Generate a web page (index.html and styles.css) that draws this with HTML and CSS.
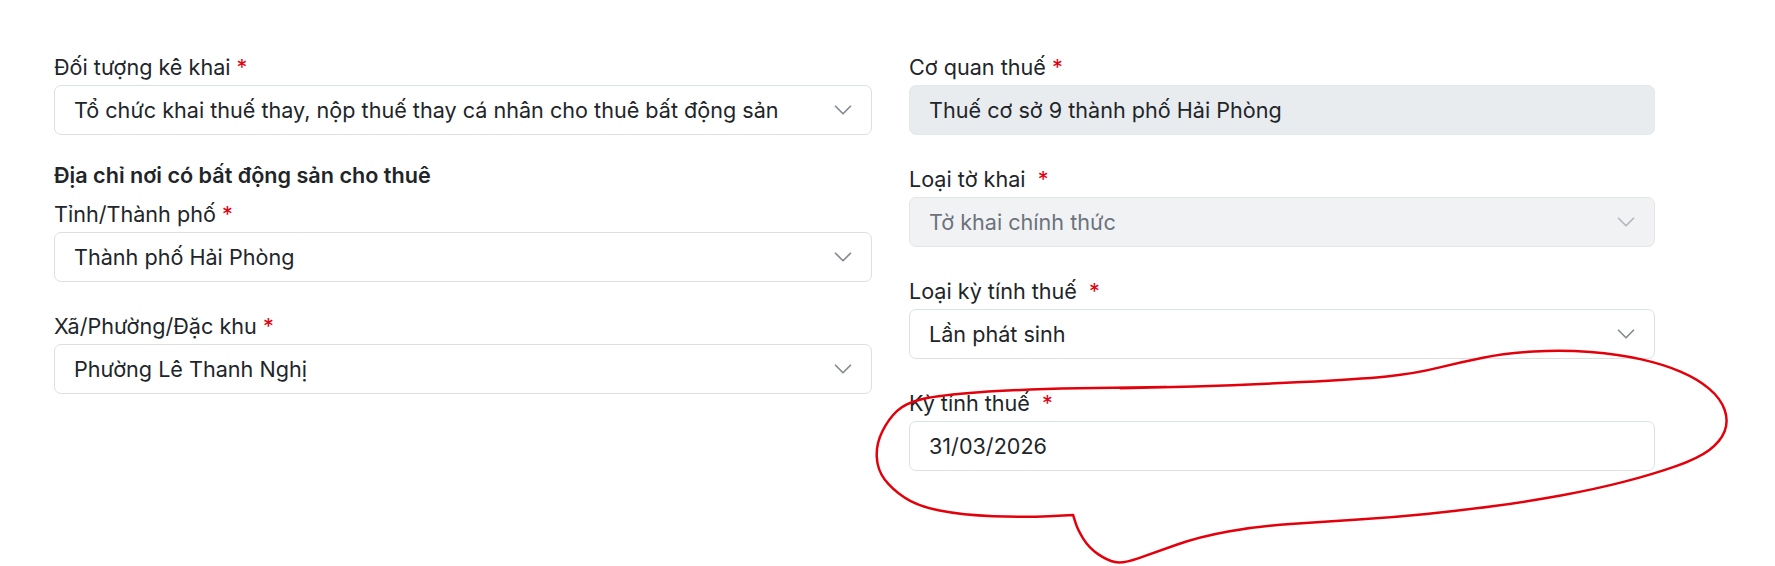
FILE: index.html
```html
<!DOCTYPE html>
<html lang="vi">
<head>
<meta charset="utf-8">
<title>Tờ khai</title>
<link rel="stylesheet" href="styles.css">
</head>
<body>
<div class="page">
  <div class="form">
    <div class="col">
      <div class="field field-first">
        <div class="label">Đối tượng kê khai <span class="req">*</span></div>
        <div class="control select">
          <span class="value">Tổ chức khai thuế thay, nộp thuế thay cá nhân cho thuê bất động sản</span>
          <svg class="chev" viewBox="0 0 16 16" width="20" height="20"><path d="M2 5l6 6 6-6" fill="none" stroke="currentColor" stroke-width="1.4" stroke-linecap="round" stroke-linejoin="round"/></svg>
        </div>
      </div>
      <div class="section-title">Địa chỉ nơi có bất động sản cho thuê</div>
      <div class="field">
        <div class="label">Tỉnh/Thành phố <span class="req">*</span></div>
        <div class="control select">
          <span class="value">Thành phố Hải Phòng</span>
          <svg class="chev" viewBox="0 0 16 16" width="20" height="20"><path d="M2 5l6 6 6-6" fill="none" stroke="currentColor" stroke-width="1.4" stroke-linecap="round" stroke-linejoin="round"/></svg>
        </div>
      </div>
      <div class="field">
        <div class="label">Xã/Phường/Đặc khu <span class="req">*</span></div>
        <div class="control select">
          <span class="value">Phường Lê Thanh Nghị</span>
          <svg class="chev" viewBox="0 0 16 16" width="20" height="20"><path d="M2 5l6 6 6-6" fill="none" stroke="currentColor" stroke-width="1.4" stroke-linecap="round" stroke-linejoin="round"/></svg>
        </div>
      </div>
    </div>
    <div class="col">
      <div class="field">
        <div class="label">Cơ quan thuế <span class="req">*</span></div>
        <div class="control readonly">
          <span class="value">Thuế cơ sở 9 thành phố Hải Phòng</span>
        </div>
      </div>
      <div class="field">
        <div class="label">Loại tờ khai &nbsp;<span class="req">*</span></div>
        <div class="control select disabled">
          <span class="value">Tờ khai chính thức</span>
          <svg class="chev" viewBox="0 0 16 16" width="20" height="20"><path d="M2 5l6 6 6-6" fill="none" stroke="currentColor" stroke-width="1.4" stroke-linecap="round" stroke-linejoin="round"/></svg>
        </div>
      </div>
      <div class="field">
        <div class="label">Loại kỳ tính thuế &nbsp;<span class="req">*</span></div>
        <div class="control select">
          <span class="value">Lần phát sinh</span>
          <svg class="chev" viewBox="0 0 16 16" width="20" height="20"><path d="M2 5l6 6 6-6" fill="none" stroke="currentColor" stroke-width="1.4" stroke-linecap="round" stroke-linejoin="round"/></svg>
        </div>
      </div>
      <div class="field">
        <div class="label">Kỳ tính thuế &nbsp;<span class="req">*</span></div>
        <div class="control">
          <span class="value">31/03/2026</span>
        </div>
      </div>
    </div>
  </div>
  <svg class="annotation" viewBox="0 0 1568 500" width="1775" height="566" aria-hidden="true">
    <path d="M1030 341.8 L952.5 343 Q900 344 865 346.5 Q830 349 815 352.5 Q800 356 792.5 363 Q785 370 779.5 381 Q774 392 774.5 403.5 Q775 415 781.5 423.5 Q788 432 799 439.5 Q810 447 830 451 Q850 455 877.5 456 Q905 457 926.5 456 L948 455 L950 461.5 Q952 468 957 476 Q962 484 970 489.5 Q978 495 985 496.5 Q992 498 1006 493 Q1020 488 1040 481 Q1060 474 1085 469.5 Q1110 465 1140 463 Q1170 461 1200 459 Q1230 457 1260 454 Q1290 451 1320 447 Q1350 443 1380 437.5 Q1410 432 1435 425.5 Q1460 419 1480 412 Q1500 405 1510 397.5 Q1520 390 1523.5 381 Q1527 372 1523.5 362 Q1520 352 1510 343.5 Q1500 335 1485 328.5 Q1470 322 1450 317.5 Q1430 313 1405 311 Q1380 309 1355 310.5 Q1330 312 1310 316 Q1290 320 1270 325 Q1250 330 1225 332.5 Q1200 335 1150 337.5 Q1100 340 1055 341.5 L990 343" fill="none" stroke="#e4000b" stroke-width="2.2" stroke-linecap="round" stroke-linejoin="round"/>
  </svg>
</div>
</body>
</html>
```

FILE: styles.css
```css
* { box-sizing: border-box; }
html, body { margin: 0; padding: 0; background: #ffffff; }
body {
  font-family: Inter, "Noto Sans", "Liberation Sans", sans-serif;
  color: #212529;
  font-size: 21.6px;
}
.page {
  position: relative;
  width: 1775px;
  height: 566px;
  overflow: hidden;
}
.form {
  display: grid;
  grid-template-columns: 818px 746px;
  column-gap: 37px;
  padding: 52px 0 0 54px;
  align-items: start;
}
.col {
  display: flex;
  flex-direction: column;
}
.field { margin-bottom: 29px; }
.field-first { margin-bottom: 25px; }
.label {
  line-height: 30px;
  height: 30px;
  margin-bottom: 3px;
  color: #212529;
  white-space: pre;
}
.req { color: #e3000f; }
.section-title {
  font-weight: 600;
  line-height: 30px;
  height: 30px;
  margin-bottom: 9px;
}
.control {
  height: 50px;
  border: 1px solid #dcdfe3;
  border-radius: 7px;
  padding: 0 18px 0 19px;
  display: flex;
  align-items: center;
  background: #ffffff;
  color: #212529;
}
.control .value { flex: 1; white-space: nowrap; }
.chev {
  color: #868b92;
  flex: none;
}
.readonly {
  background: #e9ecef;
  border-color: #e4e7eb;
}
.disabled {
  background: #f1f2f4;
  border-color: #e3e5e8;
  color: #6c737c;
}
.disabled .chev { color: #b3b7bc; }
.annotation {
  position: absolute;
  left: 0;
  top: 0;
  pointer-events: none;
}
```
